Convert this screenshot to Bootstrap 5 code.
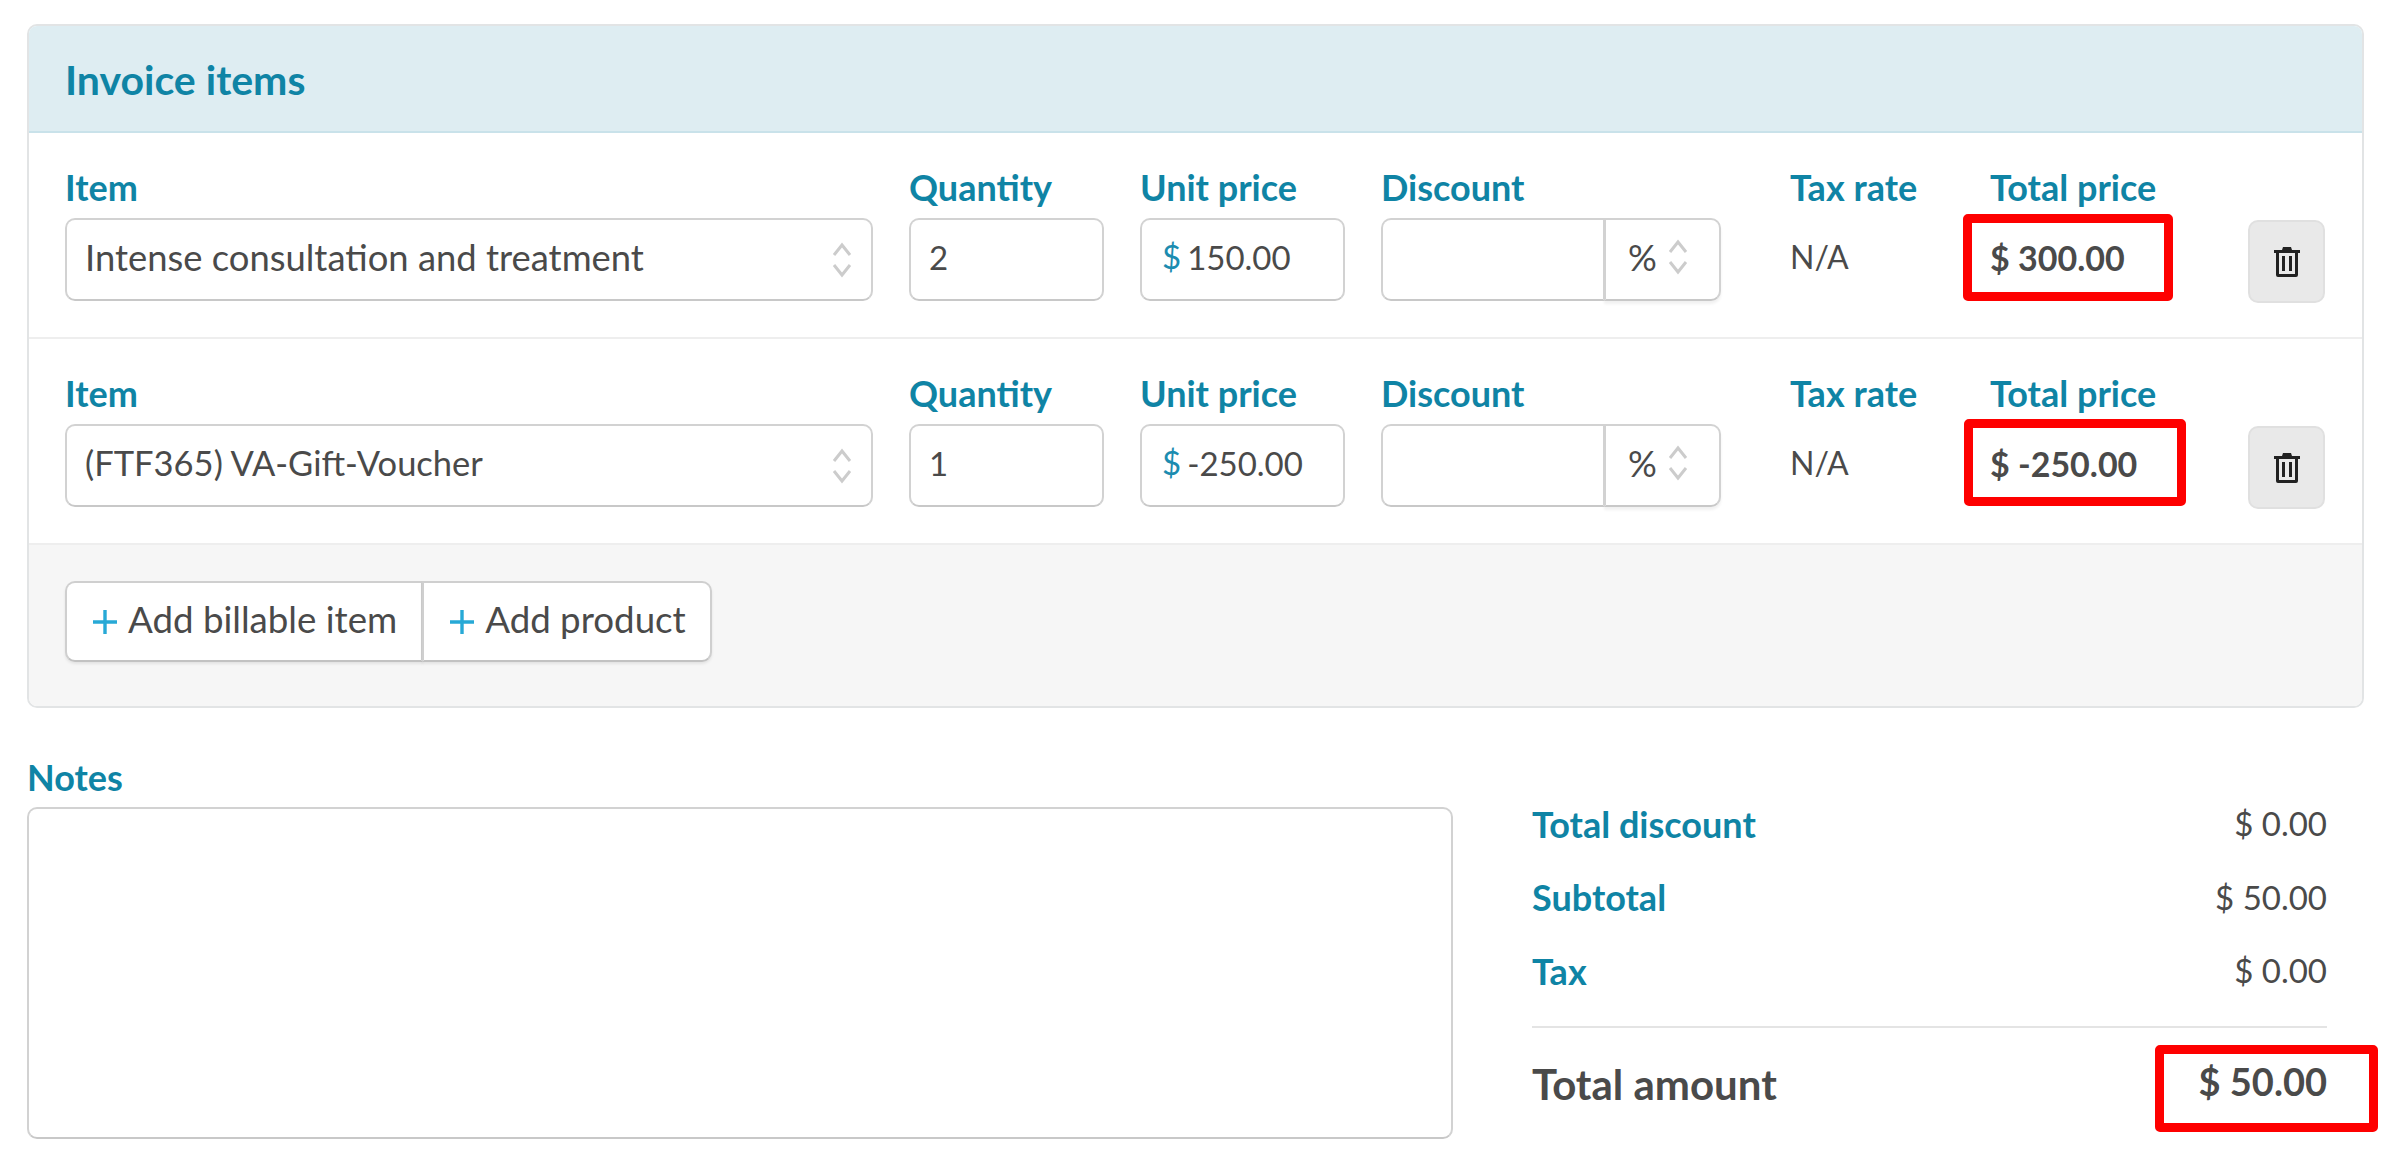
<!DOCTYPE html>
<html lang="en">
<head>
    <meta charset="UTF-8">
    <meta name="viewport" content="width=device-width, initial-scale=1.0">
    <title>Invoice items</title>
    <link href="https://cdn.jsdelivr.net/npm/bootstrap@5.3.0/dist/css/bootstrap.min.css" rel="stylesheet">
    <style>
        body {
            font-family: "Lato", "Liberation Sans", sans-serif;
            font-size: 33px;
            color: #4a4a4a;
            background: #fff;
        }

        .page {
            padding: 24px 30px 0 27px;
        }

        .invoice-card {
            border: 2px solid #e2e4e5;
            border-radius: 10px;
        }

        .invoice-card .card-header {
            height: 107px;
            padding: 3px 36px 0;
            display: flex;
            align-items: center;
            background: #deedf2;
            border-bottom: 2px solid #c9e2ea;
            border-radius: 8px 8px 0 0;
            color: #0f84a5;
            font-size: 41px;
            font-weight: 700;
        }

        .item-row {
            display: grid;
            grid-template-columns: 808px 195px 205px 373px 164px 222px 77px;
            column-gap: 36px;
            padding: 36px 36px 36px 36px;
            border-bottom: 2px solid #eee;
        }

        .field-label {
            height: 42px;
            margin-bottom: 8px;
            line-height: 42px;
            color: #0f84a5;
            font-size: 36px;
            font-weight: 700;
            white-space: nowrap;
        }

        .item-row .field-label {
            margin-bottom: 7px;
            line-height: 36px;
        }

        .form-control,
        .form-select,
        .input-group-text {
            height: 83px;
            padding-bottom: 5px;
            font-size: 33px;
            color: #4a4a4a;
            background-color: #fff;
            border: 2px solid #d2d2d2;
            border-bottom-color: #c8c8c8;
            border-radius: 10px;
        }

        .form-select {
            padding: 0 50px 5px 18px;
            font-size: 36.4px;
            background-image: url("data:image/svg+xml,%3csvg xmlns='http://www.w3.org/2000/svg' viewBox='0 0 22 38'%3e%3cpath fill='none' stroke='%23ccc' stroke-width='3' d='M3 14l8-10 8 10M3 24l8 10 8-10'/%3e%3c/svg%3e");
            background-position: right 18px center;
            background-size: 22px 38px;
        }

        .form-select.select-short {
            font-size: 34.5px;
        }

        .form-control {
            padding: 0 18px 5px;
        }

        .unit-group .input-group-text {
            padding: 0 0 5px 20px;
            color: #1c8cb0;
            border-right: 0;
        }

        .unit-group .form-control {
            padding: 0 0 5px 7px;
            border-left: 0;
        }

        .discount-group {
            width: 340px;
        }

        .discount-group .input-group-text {
            width: 117px;
            padding: 0 0 5px 22px;
            gap: 10px;
            font-size: 36px;
            box-shadow: 0 3px 3px rgba(0, 0, 0, .06);
        }

        .cell-text {
            position: relative;
            display: flex;
            align-items: center;
            height: 83px;
            padding-bottom: 5px;
            font-size: 32px;
            white-space: nowrap;
        }

        .cell-total {
            font-size: 34px;
            font-weight: 700;
        }

        .mark-box {
            position: absolute;
            height: 87px;
            border: 9px solid #fe0000;
            border-radius: 5px;
        }

        .mark-first {
            top: -4px;
            left: -27px;
            width: 210px;
        }

        .mark-second {
            top: -5px;
            left: -26px;
            width: 222px;
        }

        .mark-total {
            top: 17px;
            right: -51px;
            width: 223px;
        }

        .btn-trash {
            width: 77px;
            height: 83px;
            margin-bottom: -2px;
            padding: 0;
            display: flex;
            align-items: center;
            justify-content: center;
            background: #e9e9e9;
            border: 2px solid #e0e0e0;
            border-radius: 10px;
        }

        .invoice-card .card-footer {
            padding: 36px 36px 44px;
            background: #f6f6f6;
            border-top: 0;
            border-radius: 0 0 8px 8px;
        }

        .btn-add {
            height: 81px;
            display: flex;
            align-items: center;
            gap: 10px;
            padding: 0 24px 4px 25px;
            font-size: 36.7px;
            color: #4a4a4a;
            background: #fff;
            border: 2px solid #cfcfcf;
            border-bottom-color: #c2c2c2;
            border-radius: 10px;
            box-shadow: 0 2px 3px rgba(0, 0, 0, .08);
        }

        .btn-add svg {
            margin-top: 4px;
        }

        .summary {
            display: flex;
            margin-top: 48px;
            padding-right: 37px;
            gap: 79px;
        }

        .notes {
            width: 1426px;
        }

        .notes .field-label {
            margin-bottom: 9px;
        }

        .notes textarea {
            height: 332px;
            resize: none;
        }

        .totals {
            flex: 1;
            padding-top: 31px;
        }

        .totals-row {
            height: 73.5px;
            display: flex;
            align-items: center;
            justify-content: space-between;
        }

        .totals-row .field-label {
            margin: 0;
        }

        .totals hr {
            margin: 18px 0 0;
            border-top: 2px solid #e4e4e4;
            opacity: 1;
        }

        .totals-final {
            position: relative;
            height: 114px;
            font-size: 42px;
            font-weight: 700;
        }

        .totals-final .final-value {
            padding-bottom: 6px;
            font-size: 38px;
        }
    </style>
</head>
<body>
    <div class="page">
        <div class="card invoice-card">
            <div class="card-header">Invoice items</div>

            <!-- Billable rows -->
            <div class="item-row">
                <div>
                    <div class="field-label">Item</div>
                    <select class="form-select"><option>Intense consultation and treatment</option></select>
                </div>
                <div>
                    <div class="field-label">Quantity</div>
                    <input class="form-control" type="text" value="2">
                </div>
                <div>
                    <div class="field-label">Unit price</div>
                    <div class="input-group unit-group flex-nowrap">
                        <span class="input-group-text">$</span>
                        <input class="form-control" type="text" value="150.00">
                    </div>
                </div>
                <div>
                    <div class="field-label">Discount</div>
                    <div class="input-group discount-group flex-nowrap">
                        <input class="form-control" type="text">
                        <span class="input-group-text">%
                            <svg width="22" height="38" viewBox="0 0 22 38"><path fill="none" stroke="#ccc" stroke-width="3" d="M3 14l8-10 8 10M3 24l8 10 8-10"/></svg>
                        </span>
                    </div>
                </div>
                <div>
                    <div class="field-label">Tax rate</div>
                    <div class="cell-text">N/A</div>
                </div>
                <div>
                    <div class="field-label">Total price</div>
                    <div class="cell-text cell-total">$ 300.00<span class="mark-box mark-first"></span></div>
                </div>
                <div class="d-flex align-items-end">
                    <button class="btn btn-trash" type="button" aria-label="Delete">
                        <svg width="26" height="30" viewBox="0 0 26 30"><path fill="#222" d="M9 0h8l1 3h8v3h-2v22a2 2 0 0 1-2 2H4a2 2 0 0 1-2-2V6H0V3h8zM5 6v21h16V6zm3 3h3v15H8zm7 0h3v15h-3z"/></svg>
                    </button>
                </div>
            </div>

            <div class="item-row">
                <div>
                    <div class="field-label">Item</div>
                    <select class="form-select select-short"><option>(FTF365) VA-Gift-Voucher</option></select>
                </div>
                <div>
                    <div class="field-label">Quantity</div>
                    <input class="form-control" type="text" value="1">
                </div>
                <div>
                    <div class="field-label">Unit price</div>
                    <div class="input-group unit-group flex-nowrap">
                        <span class="input-group-text">$</span>
                        <input class="form-control" type="text" value="-250.00">
                    </div>
                </div>
                <div>
                    <div class="field-label">Discount</div>
                    <div class="input-group discount-group flex-nowrap">
                        <input class="form-control" type="text">
                        <span class="input-group-text">%
                            <svg width="22" height="38" viewBox="0 0 22 38"><path fill="none" stroke="#ccc" stroke-width="3" d="M3 14l8-10 8 10M3 24l8 10 8-10"/></svg>
                        </span>
                    </div>
                </div>
                <div>
                    <div class="field-label">Tax rate</div>
                    <div class="cell-text">N/A</div>
                </div>
                <div>
                    <div class="field-label">Total price</div>
                    <div class="cell-text cell-total">$ -250.00<span class="mark-box mark-second"></span></div>
                </div>
                <div class="d-flex align-items-end">
                    <button class="btn btn-trash" type="button" aria-label="Delete">
                        <svg width="26" height="30" viewBox="0 0 26 30"><path fill="#222" d="M9 0h8l1 3h8v3h-2v22a2 2 0 0 1-2 2H4a2 2 0 0 1-2-2V6H0V3h8zM5 6v21h16V6zm3 3h3v15H8zm7 0h3v15h-3z"/></svg>
                    </button>
                </div>
            </div>

            <div class="card-footer">
                <div class="btn-group">
                    <button class="btn btn-add" type="button"><svg width="26" height="26" viewBox="0 0 26 26"><path fill="none" stroke="#27a9d6" stroke-width="3.4" d="M13 1v24M1 13h24"/></svg>Add billable item</button>
                    <button class="btn btn-add" type="button"><svg width="26" height="26" viewBox="0 0 26 26"><path fill="none" stroke="#27a9d6" stroke-width="3.4" d="M13 1v24M1 13h24"/></svg>Add product</button>
                </div>
            </div>
        </div>

        <!-- Notes and totals -->
        <div class="summary">
            <div class="notes">
                <div class="field-label">Notes</div>
                <textarea class="form-control"></textarea>
            </div>
            <div class="totals">
                <div class="totals-row"><span class="field-label">Total discount</span><span>$ 0.00</span></div>
                <div class="totals-row"><span class="field-label">Subtotal</span><span>$ 50.00</span></div>
                <div class="totals-row"><span class="field-label">Tax</span><span>$ 0.00</span></div>
                <hr>
                <div class="totals-row totals-final"><span>Total amount</span><span class="final-value">$ 50.00</span><span class="mark-box mark-total"></span></div>
            </div>
        </div>
    </div>

    <script src="https://cdn.jsdelivr.net/npm/bootstrap@5.3.0/dist/js/bootstrap.bundle.min.js"></script>
</body>
</html>
